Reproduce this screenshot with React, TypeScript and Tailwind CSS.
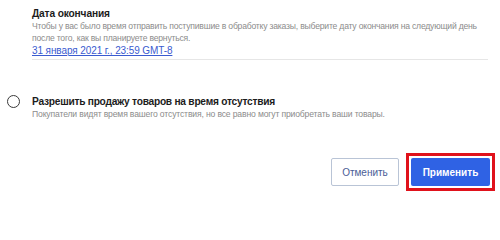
export default function App() {
  return (
    <div className="w-[500px] h-[229px] bg-white relative font-['Liberation_Sans',Arial,sans-serif] overflow-hidden">
      {/* Дата окончания */}
      <div className="ml-8 mr-3 pt-[7px] pb-[2px] border-b border-[#e6e6e6]">
        <div className="text-[10.2px] leading-[13px] font-bold text-[#1c1c1c] tracking-[-0.15px]">Дата окончания</div>
        <p className="text-[8.6px] leading-[12px] text-[#8c8c8c] tracking-[-0.2px]">
          Чтобы у вас было время отправить поступившие в обработку заказы, выберите дату окончания на следующий день после того, как вы планируете вернуться.
        </p>
        <a href="#" className="block text-[10px] leading-[13px] text-[#3a5bd0] underline tracking-[-0.1px]">
          31 января 2021 г., 23:59 GMT-8
        </a>
      </div>

      {/* Разрешить продажу */}
      <div className="flex items-start mt-[35px]">
        <div className="w-8 shrink-0 pl-[7px] pt-[0px]">
          <span className="block w-[13px] h-[13px] rounded-full border-[1.5px] border-[#3a3a3a]" />
        </div>
        <div>
          <div className="text-[10.2px] leading-[13px] font-bold text-[#1c1c1c] tracking-[-0.25px]">Разрешить продажу товаров на время отсутствия</div>
          <div className="text-[8.6px] leading-[11px] text-[#8c8c8c] tracking-[-0.15px] mt-[1px]">
            Покупатели видят время вашего отсутствия, но все равно могут приобретать ваши товары.
          </div>
        </div>
      </div>

      {/* Кнопки */}
      <div className="flex justify-end items-center gap-[7px] mt-[33px] pr-[5px]">
        <button className="w-[68px] h-[28px] border border-[#b9c4d6] rounded-[2px] text-[10px] text-[#4a5d96] bg-white">
          Отменить
        </button>
        <div className="border-[3px] border-[#e0121b] p-[2px]">
          <button className="w-[79px] h-[28px] bg-[#2f62e4] rounded-[2px] text-[10px] font-bold text-white">
            Применить
          </button>
        </div>
      </div>
    </div>
  )
}
